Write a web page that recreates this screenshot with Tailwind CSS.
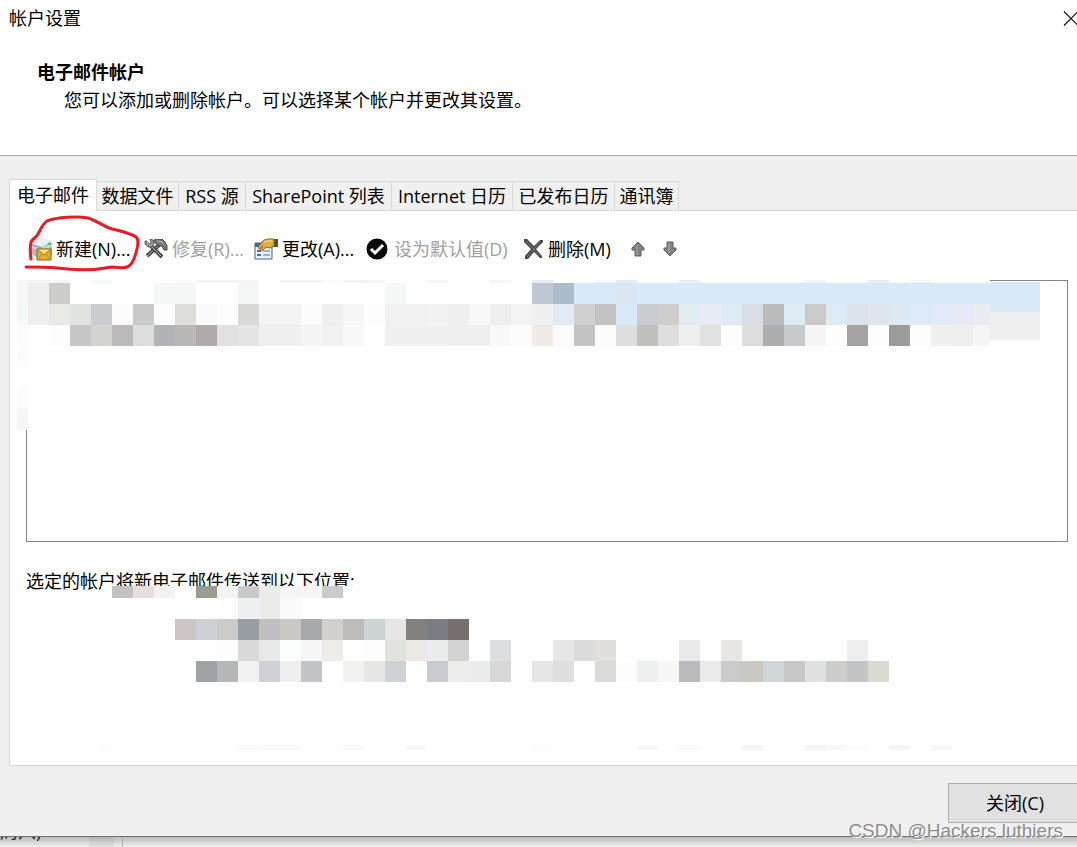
<!DOCTYPE html>
<html lang="zh-CN">
<head>
    <meta charset="UTF-8">
    <meta name="viewport" content="width=device-width, initial-scale=1.0">
    <title>帐户设置</title>
    <script src="https://cdn.jsdelivr.net/npm/@tailwindcss/browser@4"></script>
</head>

<body class="bg-[#f0f0f0] text-black text-[18px] leading-6 font-['Open_Sans','Noto_Sans_CJK_SC',sans-serif] overflow-hidden">

    <div class="relative h-screen flex flex-col overflow-hidden">

        <!-- Title bar and heading -->
        <header class="bg-white border-b border-[#a5a8a6] h-39 shrink-0">
            <div class="flex justify-between items-center h-9 pl-[9px]">
                <h1>帐户设置</h1>
                <button aria-label="关闭窗口" class="w-4 h-4 mr-[-2px] shrink-0">
                    <svg width="16" height="16" viewBox="0 0 16 16" stroke="#111" stroke-width="1.2" fill="none"><path d="M1 1.500L15 15.500M15 1.500L1 15.500"/></svg>
                </button>
            </div>
            <h2 class="font-bold mt-6 ml-[37px]">电子邮件帐户</h2>
            <p class="mt-1 ml-16">您可以添加或删除帐户。可以选择某个帐户并更改其设置。</p>
        </header>

        <!-- Tabs -->
        <nav class="flex items-end pl-[9px] mt-[23px] h-8 shrink-0 whitespace-nowrap relative z-10">
            <button class="w-22 h-8 bg-white border border-b-0 border-[#d9d9d9] pb-px shrink-0">电子邮件</button>
            <button class="w-[82px] h-[30px] border border-l-0 border-[#d9d9d9] shrink-0">数据文件</button>
            <button class="w-[67px] h-[30px] border border-l-0 border-[#d9d9d9] shrink-0">RSS 源</button>
            <button class="w-[146px] h-[30px] border border-l-0 border-[#d9d9d9] shrink-0">SharePoint 列表</button>
            <button class="w-[121px] h-[30px] border border-l-0 border-[#d9d9d9] shrink-0">Internet 日历</button>
            <button class="w-[102px] h-[30px] border border-l-0 border-[#d9d9d9] shrink-0">已发布日历</button>
            <button class="w-16 h-[30px] border border-l-0 border-[#d9d9d9] shrink-0">通讯簿</button>
            <span class="grow border-b border-[#d9d9d9]"></span>
        </nav>

        <!-- Tab page -->
        <main class="relative ml-[9px] bg-white border-l border-b border-[#d9d9d9] grow flex flex-col pl-4">
            <div class="flex items-center h-[69px] pt-1.5 pl-1 shrink-0 whitespace-nowrap">
                <button class="flex items-center gap-1 w-[114px] shrink-0">
                    <svg class="shrink-0" width="22" height="24" viewBox="0 0 22 24">
                        <path d="M1 7L10 1L21 4L22 8V18L8 21L1 17Z" fill="#b3bec6"/>
                        <path d="M2 7L10 1L21 4L12 10Z" fill="#e9eef1"/>
                        <path d="M1 8L12 11L22 6V9L12 14L1 11Z" fill="#cbd4da"/>
                        <path d="M1 8L12 11" stroke="#8997a1" fill="none"/>
                        <path d="M18 6h3v2h-3z" fill="#3fd044"/>
                        <path d="M7 12H21V23H7Z" fill="#dfb02f" stroke="#86661a"/>
                        <path d="M7 12L14 18L21 12Z" fill="#f6df80" stroke="#a17c20"/>
                        <path d="M8 22L12 17M20 22L16 17" stroke="#b88c22"/>
                    </svg>
                    <span>新建(N)...</span>
                </button>
                <button disabled class="flex items-center gap-1 w-[110px] shrink-0 text-[#a0a0a0]">
                    <svg class="shrink-0" width="24" height="20" viewBox="0 0 24 20" fill="none">
                        <path d="M3 17L15 6" stroke="#4c4c4c" stroke-width="4"/>
                        <path d="M3 17L14 7" stroke="#a8a8a8"/>
                        <path d="M8 2L13 0H18L21 3L23 7V11H20L18 7L14 7L12 4L8 3Z" fill="#777" stroke="#444"/>
                        <path d="M13 2L18 3L20 6" stroke="#bbb"/>
                        <path d="M6 6L18 18" stroke="#4c4c4c" stroke-width="4"/>
                        <path d="M7 7L17 17" stroke="#b5b5b5"/>
                        <path d="M1 2V5L4 8H8L10 5L9 1L6 0L7 4L5 5L3 4V2Z" fill="#999" stroke="#666"/>
                    </svg>
                    <span>修复(R)...</span>
                </button>
                <button class="flex items-center gap-1 w-28 shrink-0">
                    <svg class="shrink-0" width="24" height="22" viewBox="0 0 24 22">
                        <path d="M1 5H18V21H1Z" fill="#e9f2fb" stroke="#46678f"/>
                        <path d="M1 5H18V9H1Z" fill="#416c9c"/>
                        <path d="M3 12H7V14H3ZM3 16H7V18H3Z" fill="#486e9b"/>
                        <path d="M9 13H16M9 17H16" stroke="#9bb3ce" stroke-width="2"/>
                        <path d="M19 1H24V9H19Z" fill="#42534a"/>
                        <path d="M4 9L10 2L14 1H20V8L16 10L12 9L8 13L6 12L9 8L5 11Z" fill="#e2ac45" stroke="#9a681d"/>
                        <path d="M10 4L14 3H18" stroke="#ffe391" fill="none"/>
                    </svg>
                    <span>更改(A)...</span>
                </button>
                <button disabled class="flex items-center gap-1.5 w-[158px] shrink-0 text-[#a0a0a0]">
                    <svg class="shrink-0" width="22" height="22" viewBox="0 0 22 22"><circle cx="11" cy="11" r="10.500" fill="#080808"/><path d="M5 11L9 15L17 7" fill="none" stroke="#fff" stroke-width="3"/></svg>
                    <span>设为默认值(D)</span>
                </button>
                <button class="flex items-center gap-1 w-[107px] shrink-0">
                    <svg class="shrink-0" width="20" height="22" viewBox="0 0 20 22"><path d="M0 1H3L10 8L16 2H19V4L12 11L18 18V20H16L10 14L4 21H1V18L7 11L0 4Z" fill="#484848"/><path d="M2 3L16 18M16 4L3 19" stroke="#808080" fill="none"/></svg>
                    <span>删除(M)</span>
                </button>
                <button aria-label="上移" class="w-8 shrink-0">
                    <svg width="14" height="16" viewBox="0 0 14 16"><path d="M7 1L13 7V9H10V15H4V9H1V7Z" fill="#828282" stroke="#5c5c5c"/><path d="M6 4V14" stroke="#aaa"/></svg>
                </button>
                <button aria-label="下移" class="w-8 shrink-0">
                    <svg width="14" height="16" viewBox="0 0 14 16"><path d="M7 15L13 9V7H10V1H4V7H1V9Z" fill="#828282" stroke="#5c5c5c"/><path d="M6 2V12" stroke="#aaa"/></svg>
                </button>
            </div>

            <!-- Account list -->
            <div class="h-[262px] mr-[9px] border border-[#838391] shrink-0"></div>

            <p class="mt-[27px] whitespace-nowrap">选定的帐户将新电子邮件传送到以下位置:</p>

            <!-- Redacted details -->
            <svg id="mosaic" class="absolute left-[-10px] top-[-211px] pointer-events-none" width="1077" height="766" shape-rendering="crispEdges" aria-hidden="true"></svg>

            <!-- Hand-drawn mark round the New button -->
            <svg class="absolute left-[10px] top-0 pointer-events-none" width="125" height="64" viewBox="20 211 125 64" fill="none" stroke="#e81c27" stroke-width="3" stroke-linecap="round" stroke-linejoin="round" aria-hidden="true">
                <path d="M31 259C30 252 30 246 31 242C33 238 36 238 38 234C41 229 43 223 47 221C57 217 77 216 88 218C97 221 102 225 109 228C119 231 130 233 136 237C140 240 137 248 136 253C134 260 131 266 127 267C122 269 119 267 112 267C92 271 73 270 57 268C46 267 36 267 26 267"/>
            </svg>
        </main>

        <!-- Dialog buttons -->
        <footer class="h-[70px] shrink-0 flex justify-end items-start pt-[17px]">
            <button class="w-[129px] h-10 pl-1 bg-[#e1e1e1] border border-r-0 border-[#adadad]">关闭(C)</button>
        </footer>

        <!-- Window behind the dialog -->
        <div class="h-[11px] shrink-0 border-t border-[#707070] bg-linear-to-b from-[#bdbdbd] to-[#f0f0f0] flex items-end overflow-hidden">
            <span class="w-[89px] h-[10px] flex items-end pb-1 shrink-0 text-[#222]">周六)</span>
            <span class="w-[25px] h-[10px] bg-black/5 shrink-0"></span>
            <span class="w-[9px] h-[10px] border-r border-[#aaa] shrink-0"></span>
        </div>

        <span class="absolute right-[14px] bottom-1 text-[19px] text-[#8c8c8c] font-['Liberation_Sans',sans-serif] [text-shadow:1px_1px_0_#fff] whitespace-nowrap pointer-events-none">CSDN @Hackers luthiers</span>
    </div>

    <script>
        // Each row: left edge, top edge, height, then one colour per 21px cell ("-" leaves a cell empty)
        const rows = [
            [28, 280, 3, "f4f4f4 f4f4f4 - f8f8f8 - - - fafafa f4f4f4 f4f4f4 f5f5f5 - f4f4f4 f4f4f4 fafafa f4f4f4 f5f5f5 - - f5f5f5 - - f6f6f6 - e6edf2 - - f6f6f6 e0ebf4 - - e9eff3 - - - - - f3f3f3 - - e2edf5 - f5f5f5"],
            [28, 283, 21, "eeeeee cdcdcb - - - - f6f8f7 f6f8f7 - - f5f7f6 - - - - - - f6f8f7 - - - - - - bdc8d1 abbccb d8e9f7 d8e9f7 dae6f2 d8e9f7 d8e9f7 d8e9f7 d8e9f7 d8e9f7 d8e9f7 d8e9f7 d8e9f7 d8e9f7 d8e9f7 d8e9f7 d8e9f7 d8e9f7 d8e9f7 d8e9f7 d8e9f7 d8e9f7"],
            [28, 304, 21, "f0f0f0 e9e9e6 e0e3e1 cbcdd1 fbfbfb c9c9c9 fdfdfd dededb fafafa fdfdfd d8d8d7 f4f4f4 f4f4f4 fcfcfc efefef f6f6f6 fdfdfd f1f1f1 f1f1f1 f2f2f2 efefef f8f8f8 efefef f3f3f3 f0f0f0 e2eaf3 d0d0d0 c2c2c2 d8e9f7 cacccf cececb e2edf3 e7ebf5 ddebf5 d8dce5 bbbbbb ddebf5 cacaca ddebf6 dce3eb dfe5ed dfeaf0 dcebf6 e2ebf5 e7eaf4 eaedf0"],
            [28, 325, 21, "fefefe fdfdfd c6c6c6 d5d3d0 bbbab8 dbdedc b1b3b6 b9b8b6 b0abaa e1e1e1 e5e5e5 efefef efefef f4f4f4 f1f1f1 f9f9f9 fefefe f0f0f0 f0f0f0 f0f0f0 efefef efefef f9f9f9 fcfcfc f0ebe6 fbfbfb c3c3c3 fbfbfb dfdfdf c0c0bd dedede efefef e1e1e1 fdfdfd dcdcdc adaeb0 c8c9cd f5f5f5 fdfdfd a5a3a1 fdfdfd 9b9b99 fdfdfd f0f0f0 eeeeee f5f5f5"],
            [112, 586, 12, "c2c2c2 e5e0de f2f2f2 - 9b9a93 f2f3f5 c8caca ebecea f6f6f6 f6f6f6 cbcbcd"],
            [238, 598, 21, "eff0f2 ebeceb f9faf9"],
            [175, 619, 21, "ccc7c4 ced0d5 cbcbca 989da1 c0c0c3 c9c8c6 a8a9ab d1d0ce bcbcbc ced3d6 e6e6e6 838080 7a7e83 75706b"],
            [217, 640, 21, "fdfdfd dadada e8e8e8 fcfefd f7f7f7 eeedea - fdfdfd e1e2dc ebe8e6 e9edeb d3d3d3 - dddee0 - - e7e7e7 dbdbdb e0dfdd - - - eaeaea - e7e6e4 - - - - - eeeeee"],
            [196, 661, 21, "9fa3a6 b5b6b8 f1f1f1 d0d1d6 efefef c3c4c7 - f2f2f1 e8e7e5 ced2d7 - cacbcf eeedeb ebedec d8d8d8 - e7e6e4 dfdfdf - dbdbd9 fdfdfd eef0f2 f7f7f7 bab9be ebebeb cacaca cbc7c2 d0d5d8 c7c7c7 dee1df cccecc c4c5c7 dddad2"],
            [238, 745, 5, "fafafa f9f9f9 f9f9f9 - - f9f9f9 - - f8f8f8 - - - - - fcfcfc - - - - f8f8f8 - fafafa - - f5f5f5 - - f5f5f5 f8f8f8 fbfbfb - f5f5f5 - f6f6f6"]
        ];

        // Blank areas under the cells: x, y, width, height, colour
        const blanks = [
            [17, 280, 973, 66, "ffffff"], [17, 346, 11, 84, "ffffff"], [101, 586, 270, 33, "ffffff"]
        ];

        // Odd-sized blocks beside the cells
        const blocks = [
            [17, 280, 11, 24, "f7f7f7"], [17, 304, 11, 21, "f4f8f6"], [17, 325, 11, 21, "fbfbfb"], [17, 346, 11, 21, "fcfcfc"],
            [17, 388, 11, 21, "fbfbfb"], [17, 409, 11, 21, "f6f6f6"],
            [990, 282, 50, 30, "d8e9f7"], [990, 312, 50, 28, "efefef"], [990, 340, 5, 6, "ffffff"], [101, 745, 11, 5, "fcfcfc"]
        ];

        const mosaic = document.getElementById("mosaic");

        function addBlock(x, y, w, h, color) {
            const rect = document.createElementNS("http://www.w3.org/2000/svg", "rect");
            rect.setAttribute("x", x);
            rect.setAttribute("y", y);
            rect.setAttribute("width", w);
            rect.setAttribute("height", h);
            rect.setAttribute("fill", "#" + color);
            mosaic.appendChild(rect);
        }

        blanks.forEach(block => addBlock(...block));
        rows.forEach(([x, y, h, colors]) => {
            colors.split(" ").forEach((color, i) => {
                if (color !== "-") addBlock(x + i * 21, y, 21, h, color);
            });
        });
        blocks.forEach(block => addBlock(...block));
    </script>

</body>
</html>
